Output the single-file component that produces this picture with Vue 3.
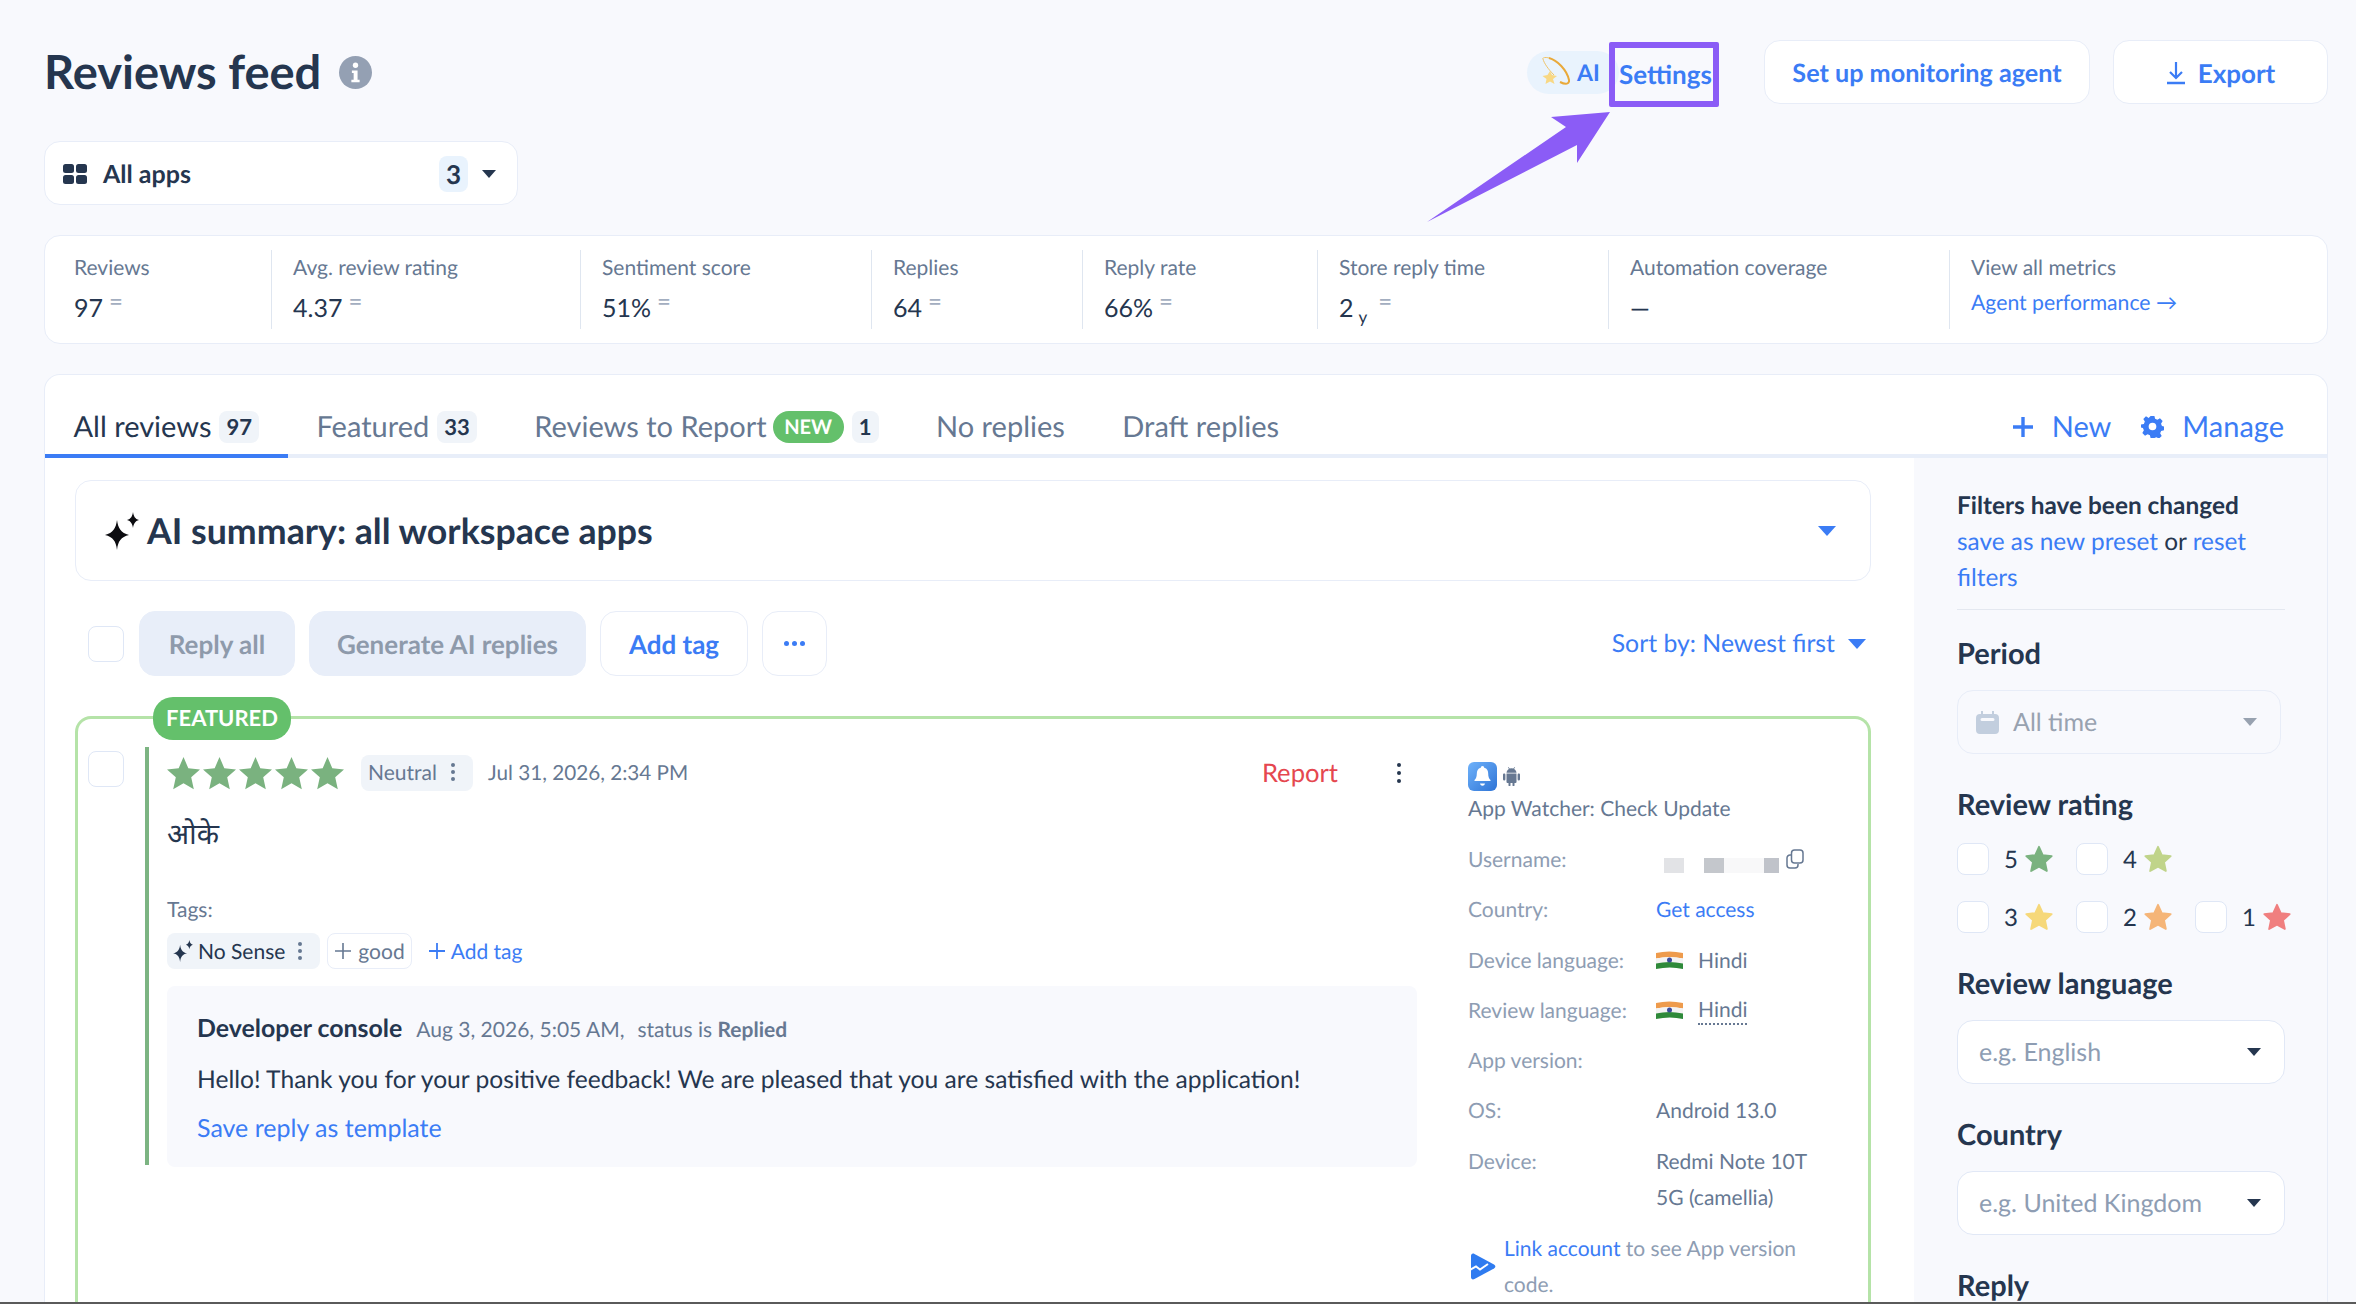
<template>
  <div class="page">
    <div class="content">
      <header class="top">
        <h1 class="title">Reviews feed</h1>
        <svg class="info" viewBox="0 0 32 32"><circle cx="16" cy="16" r="16" fill="#94a0b3" /><circle cx="16" cy="9" r="2.6" fill="#fff" /><path d="M12.5 14h5.5v9h2v2.5h-8V23h2.2v-6.5h-1.700z" fill="#fff" /></svg>
        <div class="top-actions">
          <div class="ai-pill">
            <svg class="ai-star" viewBox="0 0 30 32"><path d="M3 3C2 1.500 6 1 9 2" fill="none" stroke="#f0c468" stroke-width="1" /><path d="M3 3c1 4 5 10 11 16" fill="none" stroke="#f0c468" stroke-width="1" /><path d="M9 2c8 2 18 12 20 22 .6 4-3 5-9 2" fill="none" stroke="#e9a93a" stroke-width="2" /><path d="M10 15l2 4 5 1-4 3 1.500 5-4.500-2.500-4.500 2.500 1-5-4-3 5-1z" fill="#f8d884" /></svg>
            <span>AI</span>
          </div>
          <a class="settings">Settings</a>
          <button class="btn top-btn monitor">Set up monitoring agent</button>
          <button class="btn top-btn export">
            <svg width="20" height="24" viewBox="0 0 20 24"><path d="M10 1v15M4 11l6 6 6-6" fill="none" stroke="#3b7cf5" stroke-width="2.200" /><path d="M1 22h18" stroke="#3b7cf5" stroke-width="2.500" /></svg>
            Export
          </button>
        </div>
        <svg class="arrow" viewBox="0 0 195 115"><path d="M190 2L131 7l15 10L7 112 157 35v18z" fill="#8b5cf6" /></svg>
      </header>

      <div class="apps-select">
        <svg width="24" height="20" viewBox="0 0 24 20"><g fill="#25364f"><rect width="11" height="9" rx="2.500" /><rect x="13" width="11" height="9" rx="2.500" /><rect y="11" width="11" height="9" rx="2.500" /><rect x="13" y="11" width="11" height="9" rx="2.500" /></g></svg>
        <span class="apps-label">All apps</span>
        <span class="apps-count">3</span>
        <i class="caret dark"></i>
      </div>

      <section class="stats">
        <div v-for="s in stats" :key="s.label" class="stat">
          <div class="stat-label">{{ s.label }}</div>
          <div class="stat-value">
            {{ s.value }}<sub v-if="s.unit">{{ s.unit }}</sub>
            <span v-if="s.eq" class="eq" :class="{ wide: s.unit }">=</span>
          </div>
        </div>
        <div class="stat">
          <div class="stat-label">View all metrics</div>
          <a class="link perf">Agent performance →</a>
        </div>
      </section>

      <section class="main-card">
        <nav class="tabs">
          <div v-for="t in tabs" :key="t.name" class="tab" :class="{ active: t.active }">
            <span>{{ t.name }}</span>
            <span v-if="t.isNew" class="new-pill">NEW</span>
            <span v-if="t.count" class="tab-count">{{ t.count }}</span>
          </div>
          <div class="tab-actions">
            <a class="tab-action">
              <svg width="22" height="22" viewBox="0 0 22 22"><path d="M11 1v20M1 11h20" stroke="#3b7cf5" stroke-width="3.400" /></svg>
              New
            </a>
            <a class="tab-action">
              <svg width="23" height="23" viewBox="0 0 24 24"><path fill-rule="evenodd" fill="#3b7cf5" d="M10 1h4l.7 3 2.400 1 2.700-1.600 2.800 2.800L20.900 9l1 2.400 2.100.6v4l-3 .7-1 2.400 1.600 2.700-2.800 2.800L16 23.100l-2 .9h-4l-.7-3-2.400-1-2.700 1.600-2.800-2.800L3 16l-1-2.400L0 13V10l3-.7 1-2.400L2.400 4.200 5.200 1.400 8 3zM12 8a4 4 0 1 0 0 8 4 4 0 0 0 0-8z" /></svg>
              Manage
            </a>
          </div>
        </nav>

        <div class="body">
          <div class="feed">
            <div class="summary">
              <svg width="38" height="40" viewBox="0 0 38 38"><path d="M14 8c1 8 4 13 12 15-8 2-11 6-12 15-1-9-4-13-12-15 8-2 11-7 12-15zM30 0c.6 4 2 7 6 8-4 1-5.400 4-6 8-.6-4-2-7-6-8 4-1 5.400-4 6-8z" fill="#0c0c10" /></svg>
              <h2>AI summary: all workspace apps</h2>
              <i class="caret blue"></i>
            </div>

            <div class="toolbar">
              <span class="check toolbar-check"></span>
              <button class="btn muted reply-all">Reply all</button>
              <button class="btn muted generate">Generate AI replies</button>
              <button class="btn add-tag">Add tag</button>
              <button class="btn more"><i></i><i></i><i></i></button>
              <a class="sort">Sort by: Newest first <i class="caret blue"></i></a>
            </div>

            <article class="review">
              <span class="featured">FEATURED</span>
              <span class="check review-check"></span>
              <div class="review-main">
                <div class="meta">
                  <div class="stars">
                    <svg v-for="n in 5" :key="n" width="33" height="33" viewBox="0 0 24 24"><path d="M12 0l3.500 8.200 8.500.8-6.400 5.800 1.900 8.700L12 19l-7.500 4.500 1.900-8.700L0 9l8.500-.8z" fill="#7ab27f" /></svg>
                  </div>
                  <span class="chip neutral">Neutral <b class="vdots"><i></i><i></i><i></i></b></span>
                  <span class="date">Jul 31, 2026, 2:34 PM</span>
                  <a class="report">Report</a>
                  <b class="vdots big"><i></i><i></i><i></i></b>
                </div>
                <p class="review-text">ओके</p>
                <div class="tags-label">Tags:</div>
                <div class="tags">
                  <span class="chip no-sense">
                    <svg width="22" height="22" viewBox="0 0 38 38"><path d="M14 8c1 8 4 13 12 15-8 2-11 6-12 15-1-9-4-13-12-15 8-2 11-7 12-15zM30 0c.6 4 2 7 6 8-4 1-5.400 4-6 8-.6-4-2-7-6-8 4-1 5.400-4 6-8z" fill="#25364f" /></svg>
                    No Sense <b class="vdots"><i></i><i></i><i></i></b>
                  </span>
                  <span class="chip good">
                    <svg width="18" height="18" viewBox="0 0 18 18"><path d="M9 1v16M1 9h16" stroke="#667892" stroke-width="1.600" /></svg>
                    good
                  </span>
                  <a class="link add-inline">
                    <svg width="18" height="18" viewBox="0 0 18 18"><path d="M9 1v16M1 9h16" stroke="#3b7cf5" stroke-width="1.800" /></svg>
                    Add tag
                  </a>
                </div>
                <div class="reply">
                  <div class="reply-head">
                    <strong>Developer console</strong>
                    <span>Aug 3, 2026, 5:05 AM,</span>
                    <span>status is <b>Replied</b></span>
                  </div>
                  <p class="reply-text">Hello! Thank you for your positive feedback! We are pleased that you are satisfied with the application!</p>
                  <a class="link save">Save reply as template</a>
                </div>
              </div>

              <aside class="side">
                <div class="app-icons">
                  <svg width="29" height="29" viewBox="0 0 29 29"><defs><linearGradient id="bell" x1="0" y1="0" x2="1" y2="1"><stop offset="0" stop-color="#6fb2fa" /><stop offset="1" stop-color="#2f74d6" /></linearGradient></defs><rect width="29" height="29" rx="6" fill="url(#bell)" /><path d="M14.500 4c1 0 1.700.8 1.700 1.700 3 .8 4 3 4 6 0 3 .8 5 2.300 6.300v1H6.500v-1C8 16.700 8.800 14.700 8.800 11.700c0-3 1-5.200 4-6C12.800 4.800 13.500 4 14.500 4zM12 21.500h5c-.4 1.500-1.300 2.200-2.500 2.200s-2.100-.7-2.500-2.200z" fill="#fff" /></svg>
                  <svg width="17" height="19" viewBox="0 0 17 19"><path fill="#667892" d="M3.500 6.500h10v8.500a1 1 0 0 1-1 1h-1v2.200a1 1 0 0 1-2 0V16h-2v2.200a1 1 0 0 1-2 0V16h-1a1 1 0 0 1-1-1zM1.200 6.500c.7 0 1.200.5 1.200 1.200v4.600a1.200 1.200 0 0 1-2.400 0V7.700c0-.7.500-1.200 1.200-1.200zM15.800 6.500c.7 0 1.200.5 1.200 1.200v4.600a1.200 1.200 0 0 1-2.400 0V7.700c0-.7.500-1.200 1.200-1.200zM3.500 5.700C3.700 3.900 4.700 2.600 6 2L5 .4 5.500 0l1.100 1.600a5.600 5.600 0 0 1 3.800 0L11.500 0l.5.4L11 2c1.300.6 2.300 1.900 2.500 3.700z" /></svg>
                </div>
                <div class="app-name">App Watcher: Check Update</div>
                <dl class="details">
                  <dt>Username:</dt>
                  <dd class="user">
                    <span class="redact"><i class="r1"></i><i class="r2"></i><i class="r3"></i><i class="r4"></i></span>
                    <svg class="copy" width="18" height="20" viewBox="0 0 18 20"><rect x="5.500" y="1" width="11.500" height="13" rx="3" fill="none" stroke="#667892" stroke-width="1.500" /><path d="M5 6H4a3 3 0 0 0-3 3v7a3 3 0 0 0 3 3h5a3 3 0 0 0 3-3v-1" fill="none" stroke="#667892" stroke-width="1.500" /></svg>
                  </dd>
                  <dt>Country:</dt>
                  <dd><a class="link">Get access</a></dd>
                  <dt>Device language:</dt>
                  <dd class="lang">
                    <svg class="flag" width="27" height="19" viewBox="0 0 27 19"><path d="M0 2q13-3 27 0v5.500q-13-3-27 0z" fill="#ee9b4c" /><path d="M0 7.500q13-3 27 0v5q-13-3-27 0z" fill="#f3f3f3" /><path d="M0 12.500q13-3 27 0V18q-13-3-27 0z" fill="#2f8a3a" /><circle cx="13.500" cy="9" r="2.500" fill="#3b4a9a" /></svg>
                    <span>Hindi</span>
                  </dd>
                  <dt>Review language:</dt>
                  <dd class="lang">
                    <svg class="flag" width="27" height="19" viewBox="0 0 27 19"><path d="M0 2q13-3 27 0v5.500q-13-3-27 0z" fill="#ee9b4c" /><path d="M0 7.500q13-3 27 0v5q-13-3-27 0z" fill="#f3f3f3" /><path d="M0 12.500q13-3 27 0V18q-13-3-27 0z" fill="#2f8a3a" /><circle cx="13.500" cy="9" r="2.500" fill="#3b4a9a" /></svg>
                    <span class="dotted">Hindi</span>
                  </dd>
                  <dt>App version:</dt>
                  <dd></dd>
                  <dt>OS:</dt>
                  <dd>Android 13.0</dd>
                  <dt>Device:</dt>
                  <dd>Redmi Note 10T 5G (camellia)</dd>
                </dl>
                <div class="link-account">
                  <svg width="26" height="27" viewBox="0 0 26 27"><path d="M1 3c0-2 1.500-3 3.500-2L24 11.500c1.800 1 1.800 3 0 4L4.500 26C2.500 27 1 26 1 24z" fill="#2f7bf0" /><path d="M0 17l6-3.500 4 3L18 11" fill="none" stroke="#fff" stroke-width="2" /></svg>
                  <p><a class="link">Link account</a> to see App version code.</p>
                </div>
              </aside>
            </article>
          </div>

          <aside class="filters">
            <div class="changed"><b>Filters have been changed</b><br /><a class="link">save as new preset</a> or <a class="link">reset filters</a></div>
            <h3 class="period">Period</h3>
            <div class="select disabled">
              <svg width="23" height="23" viewBox="0 0 23 23"><path fill="#c2cede" d="M5 0h2v3h9V0h2v3h1a4 4 0 0 1 4 4v12a4 4 0 0 1-4 4H4a4 4 0 0 1-4-4V7a4 4 0 0 1 4-4h1zM6 7a1 1 0 0 0 0 3h11a1 1 0 0 0 0-3z" /></svg>
              <span>All time</span>
              <i class="caret gray"></i>
            </div>
            <h3>Review rating</h3>
            <div class="ratings">
              <div v-for="(row, i) in ratingRows" :key="i" class="rating-row">
                <label v-for="r in row" :key="r.n" class="rating">
                  <span class="check"></span>
                  <span class="rating-n">{{ r.n }}</span>
                  <svg width="30" height="29" viewBox="0 0 24 24"><path d="M12 1.500l3.100 6.900 7.400.8-5.500 5 1.500 7.300L12 18l-6.500 3.500L7 14.200l-5.500-5 7.400-.8z" :fill="r.color" :stroke="r.color" stroke-width="1.500" stroke-linejoin="round" /></svg>
                </label>
              </div>
            </div>
            <h3>Review language</h3>
            <div class="select wide"><span class="placeholder">e.g. English</span><i class="caret dark"></i></div>
            <h3>Country</h3>
            <div class="select wide"><span class="placeholder">e.g. United Kingdom</span><i class="caret dark"></i></div>
            <h3>Reply</h3>
          </aside>
        </div>
      </section>
    </div>
    <div class="edge"></div>
  </div>
</template>

<script setup>
const stats = [
  { label: 'Reviews', value: '97', eq: true },
  { label: 'Avg. review rating', value: '4.37', eq: true },
  { label: 'Sentiment score', value: '51%', eq: true },
  { label: 'Replies', value: '64', eq: true },
  { label: 'Reply rate', value: '66%', eq: true },
  { label: 'Store reply time', value: '2', unit: 'y', eq: true },
  { label: 'Automation coverage', value: '—' }
]

const tabs = [
  { name: 'All reviews', count: 97, active: true },
  { name: 'Featured', count: 33 },
  { name: 'Reviews to Report', count: 1, isNew: true },
  { name: 'No replies' },
  { name: 'Draft replies' }
]

const ratingRows = [
  [{ n: 5, color: '#7ab27f' }, { n: 4, color: '#c0d48a' }],
  [{ n: 3, color: '#f6d87a' }, { n: 2, color: '#f5b578' }, { n: 1, color: '#f07f7f' }]
]
</script>

<style>
html, body { margin: 0; overflow: hidden; }
</style>

<style scoped>
.page {
  height: 1304px;
  display: flex;
  flex-direction: column;
  overflow: hidden;
  background: #f8f9fd;
  font-family: Lato, "Noto Sans", sans-serif;
  color: #25364f;
  text-rendering: geometricPrecision;
}
.content { flex: 1; min-height: 0; overflow: hidden; padding: 40px 28px 0 44px; }
.edge { height: 2px; background: #5a5a5a; }
h1, h2, h3, p, dl, dd { margin: 0; }
button { font-family: inherit; cursor: pointer; text-rendering: geometricPrecision; }
.link { color: #3b7cf5; }

/* header */
.top { position: relative; display: flex; align-items: center; height: 64px; }
.title { font-size: 47px; font-weight: 700; line-height: 64px; }
.info { width: 33px; height: 33px; margin-left: 18px; }
.top-actions { margin-left: auto; display: flex; align-items: center; }
.ai-pill {
  display: flex; align-items: center; gap: 7px;
  width: 92px; height: 43px; padding-left: 13px; box-sizing: border-box;
  background: #e9f3fd; border-radius: 22px;
  color: #3b7cf5; font-size: 23px; font-weight: 700;
}
.ai-star { width: 30px; height: 32px; }
.settings {
  width: 110px; height: 65px; box-sizing: border-box;
  margin-left: -10px; margin-right: 45px; padding-left: 3px;
  position: relative; top: 2px;
  border: 6px solid #8b5cf6; border-radius: 2px;
  display: flex; align-items: center; justify-content: center;
  color: #3b7cf5; font-size: 26px; font-weight: 700; white-space: nowrap;
}
.btn { border: 1px solid #e8edf8; border-radius: 16px; background: #fff; color: #3b7cf5; font-size: 26px; font-weight: 700; }
.top-btn { height: 64px; padding-top: 2px; display: flex; align-items: center; justify-content: center; gap: 12px; }
.monitor { width: 326px; margin-right: 23px; font-size: 25.200px; }
.export { width: 215px; }
.arrow { position: absolute; left: 1376px; top: 70px; width: 195px; height: 115px; }

.apps-select {
  margin-top: 37px; width: 474px; height: 64px; box-sizing: border-box;
  display: flex; align-items: center; padding: 1px 21px 0 18px;
  background: #fff; border: 1px solid #e8edf8; border-radius: 16px;
}
.apps-label { margin-left: 16px; font-size: 25px; font-weight: 700; }
.apps-count {
  margin-left: auto; width: 29px; height: 36px; border-radius: 8px;
  background: #e9f3fd; text-align: center; font-size: 26px; font-weight: 700; line-height: 36px;
}
.caret { display: inline-block; width: 0; height: 0; border-left: 7px solid transparent; border-right: 7px solid transparent; border-top: 8px solid; }
.caret.dark { color: #25364f; }
.caret.blue { color: #3b7cf5; }
.caret.gray { color: #98a2b0; }
.apps-select .caret { margin-left: 14px; }

/* stats */
.stats {
  margin-top: 30px; height: 109px; box-sizing: border-box; padding: 14px 0;
  display: grid; grid-template-columns: 226px 309px 291px 211px 235px 291px 341px 1fr;
  background: #fff; border: 1px solid #e8edf8; border-radius: 16px;
}
.stat { padding-left: 21px; border-left: 1px solid #dfe6f0; white-space: nowrap; }
.stat:first-child { padding-left: 29px; border-left: 0; }
.stat-label { margin-top: 5px; font-size: 21px; line-height: 26px; color: #667892; }
.stat-value { margin-top: 12px; font-size: 25px; line-height: 30px; color: #25364f; position: relative; }
.stat-value sub { font-size: 17px; margin-left: 5px; line-height: 0; }
.eq { position: relative; top: -7px; margin-left: 6px; font-size: 24px; line-height: 0; color: #a3aec0; }
.eq.wide { margin-left: 11px; }
.perf { display: block; margin-top: 7px; font-size: 21.200px; line-height: 28px; }

/* main card */
.main-card {
  margin-top: 30px; height: 930px; overflow: hidden;
  background: #fff; border: 1px solid #e8edf8; border-bottom: 0; border-radius: 16px 16px 0 0;
}
.tabs { display: flex; box-sizing: border-box; height: 83px; border-bottom: 4px solid #e8eef9; align-items: stretch; }
.tab {
  position: relative; display: flex; align-items: center; gap: 8px;
  padding: 24px 29px 0 28.500px; font-size: 29px; color: #667892;
}
.tab.active { color: #25364f; }
.tab.active::after { content: ""; position: absolute; left: 0; right: 0; bottom: -4px; height: 4px; background: #3b7cf5; }
.tab-count {
  height: 32px; min-width: 27px; padding: 0 7px; box-sizing: border-box; border-radius: 8px;
  background: #f0f4f9; color: #25364f; font-size: 22px; font-weight: 700; line-height: 32px; text-align: center;
}
.new-pill { height: 32px; margin-left: -2px; padding: 0 11.500px; border-radius: 16px; background: #64c06b; color: #fff; font-size: 20px; font-weight: 700; line-height: 32px; }
.tab-actions { margin-left: auto; display: flex; gap: 30px; padding: 24px 43px 0 0; }
.tab-action { display: flex; align-items: center; gap: 18px; color: #3b7cf5; font-size: 29px; }

.body { display: flex; }
.feed { width: 1869px; box-sizing: border-box; padding: 22px 43px 0 30px; background: #fff; }

.summary {
  height: 101px; box-sizing: border-box; padding: 0 34px 0 27px;
  display: flex; align-items: center; gap: 6px;
  border: 1px solid #e8edf8; border-radius: 16px;
}
.summary h2 { font-size: 35.700px; font-weight: 700; }
.summary .caret { margin-left: auto; border-left-width: 9px; border-right-width: 9px; border-top-width: 10px; }

.toolbar { margin-top: 30px; height: 65px; display: flex; align-items: center; gap: 14px; }
.check { display: block; flex: none; box-sizing: border-box; width: 32px; height: 32px; background: #fff; border: 1px solid #dfe7f6; border-radius: 8px; }
.toolbar-check { width: 36px; height: 36px; margin: 0 1px 0 13px; }
.toolbar .btn { height: 65px; }
.btn.muted { background: #e8eef9; border-color: #e8eef9; color: #8e9aab; }
.reply-all { width: 156px; }
.generate { width: 277px; }
.add-tag { width: 148px; }
.more { width: 65px; display: flex; align-items: center; justify-content: center; gap: 3px; }
.more i { width: 5px; height: 5px; border-radius: 50%; background: #3b7cf5; }
.sort { margin-left: auto; margin-right: 5px; display: flex; align-items: center; gap: 13px; color: #3b7cf5; font-size: 24.800px; }
.sort .caret { border-left-width: 9px; border-right-width: 9px; border-top-width: 10px; }

/* review */
.review {
  position: relative; margin-top: 40px; height: 640px; box-sizing: border-box;
  display: flex; align-items: flex-start; padding: 28px 0 0 10px;
  border: 3px solid #b5e3a8; border-bottom: 0; border-radius: 16px 16px 0 0;
}
.featured {
  position: absolute; left: 75px; top: -22px; width: 138px; height: 43px; border-radius: 20px;
  background: #64c06b; color: #fff; font-size: 22px; font-weight: 700; line-height: 42px; text-align: center;
}
.review-check { width: 36px; height: 36px; margin: 4px 21px 0 0; }
.review-main { width: 1272px; flex: none; box-sizing: border-box; height: 418px; padding-left: 18px; border-left: 4px solid #7cb482; }
.meta { display: flex; align-items: center; margin-top: 8px; height: 36px; }
.stars { display: flex; gap: 3px; }
.chip { display: inline-flex; align-items: center; border-radius: 8px; font-size: 21px; }
.neutral { margin-left: 17px; height: 36px; width: 112px; box-sizing: border-box; padding: 0 7px 2px; background: #f0f4f9; color: #667892; gap: 14px; }
.vdots { display: inline-flex; flex-direction: column; gap: 3px; }
.vdots i { width: 4px; height: 4px; border-radius: 50%; background: #667892; }
.date { margin-left: 15px; font-size: 20.700px; color: #667892; }
.report { margin-left: auto; font-size: 25.600px; color: #e5474f; }
.vdots.big { margin-left: 59px; margin-right: 16px; gap: 4px; }
.vdots.big i { width: 4px; height: 4px; background: #25364f; }
.review-text { margin-top: 23px; font-size: 29px; line-height: 40px; font-family: Lato, "Noto Sans", "Noto Sans CJK SC", "DejaVu Sans", sans-serif; }
.tags-label { margin-top: 42px; font-size: 21px; line-height: 28px; color: #667892; }
.tags { margin-top: 9px; display: flex; align-items: center; gap: 7px; height: 36px; }
.no-sense { height: 36px; padding: 0 18px 0 5px; background: #f0f4f9; color: #25364f; gap: 4px; }
.no-sense .vdots { margin-left: 9px; }
.good { height: 36px; padding: 0 6px; box-sizing: border-box; border: 1px solid #e8edf8; color: #667892; gap: 6px; }
.add-inline { margin-left: 9px; display: flex; align-items: center; gap: 5px; font-size: 21px; }
.reply { margin-top: 17px; width: 1250px; height: 181px; box-sizing: border-box; padding: 26px 30px 0; background: #f8f9fd; border-radius: 8px; }
.reply-head { display: flex; align-items: baseline; gap: 14px; font-size: 21px; color: #667892; line-height: 32px; }
.reply-head strong { font-size: 24.900px; color: #25364f; }
.reply-head span + span { margin-left: -1px; }
.reply-text { margin-top: 17px; font-size: 24.600px; line-height: 34px; color: #25364f; }
.save { display: block; margin-top: 14px; font-size: 25px; line-height: 34px; }

.side { width: 345px; margin-left: 51px; flex: none; padding-top: 15px; font-size: 21px; color: #667892; }
.app-icons { display: flex; align-items: center; gap: 6px; height: 29px; }
.app-name { margin-top: 4px; line-height: 28px; }
.details { margin-top: 19px; display: grid; grid-template-columns: 188px 1fr; grid-auto-rows: minmax(50.300px, auto); }
.details dt { color: #8e9db3; line-height: 36px; }
.details dd { line-height: 36px; }
.lang { display: flex; align-items: center; gap: 15px; height: 36px; }
.dotted { border-bottom: 2px dotted #667892; line-height: 26px; }
.user { position: relative; }
.redact { position: absolute; left: 8px; top: 16px; display: flex; height: 15px; width: 115px; }
.redact i { position: absolute; top: 0; height: 15px; }
.r1 { left: 0; width: 20px; background: #e2e3e6; }
.r2 { left: 40px; width: 20px; background: #c4c7cc; }
.r3 { left: 60px; width: 40px; background: #f8f8f9; }
.r4 { left: 100px; width: 15px; background: #c0c3ca; }
.copy { position: absolute; left: 130px; top: 7px; }
.link-account { display: flex; align-items: center; gap: 8px; margin-top: 15px; color: #8e9db3; line-height: 36px; margin-left: 2px; }
.link-account svg { flex: none; }
.link-account p { width: 300px; }

/* filters */
.filters { flex: 1; min-width: 0; box-sizing: border-box; padding: 30px 42px 0 43px; background: #f8f9fd; }
.changed { font-size: 24.400px; line-height: 36px; padding-bottom: 13px; border-bottom: 1px solid #e4e8f0; }
.changed b { font-weight: 700; }
.filters h3 { margin-top: 33px; font-size: 29px; line-height: 36px; font-weight: 700; }
.filters h3.period { margin-top: 26px; }
.select {
  margin-top: 18px; height: 64px; box-sizing: border-box;
  display: flex; align-items: center; justify-content: flex-start;
  background: #fff; border: 1px solid #e1e8f6; border-radius: 16px;
  font-size: 25px;
}
.select .caret { margin-left: auto; }
.select.disabled { width: 324px; padding: 0 23px 0 18px; gap: 14px; background: transparent; border-color: #e8edf8; color: #98a2b0; }
.select.wide { width: 328px; padding: 0 23px 0 21px; }
.placeholder { color: #8e9db3; }
.ratings { margin-top: 20px; display: flex; flex-direction: column; gap: 26px; }
.rating-row { display: flex; }
.rating { display: flex; flex: none; align-items: center; width: 119px; }
.rating-n { margin-left: 15px; margin-right: 3px; width: 17px; font-size: 24px; }
</style>
